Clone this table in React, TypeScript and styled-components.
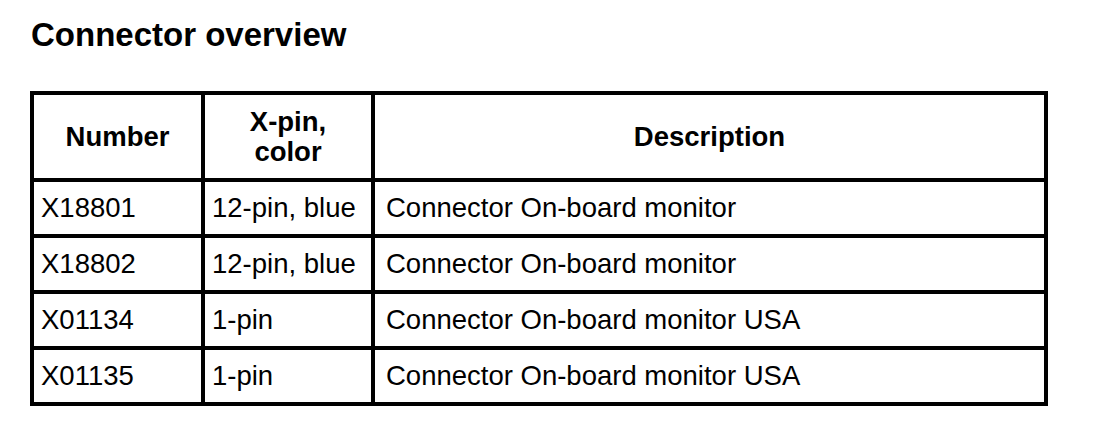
import React from "react";
import styled, { createGlobalStyle } from "styled-components";

const GlobalStyle = createGlobalStyle`
  html, body {
    margin: 0;
    padding: 0;
    background: #ffffff;
  }
  body {
    font-family: "Liberation Sans", Arial, Helvetica, sans-serif;
    color: #000000;
  }
`;

const Page = styled.div`
  width: 1120px;
  height: 434px;
  box-sizing: border-box;
  padding: 17px 0 0 30px;
  background: #ffffff;
`;

const Title = styled.h1`
  margin: 0 0 38px 1px;
  font-size: 33px;
  line-height: 36px;
  font-weight: 700;
`;

const Table = styled.div`
  display: grid;
  grid-template-columns: 167px 166px 669px;
  grid-template-rows: 83px repeat(4, 52px);
  gap: 4px;
  width: 1018px;
  box-sizing: border-box;
  border: 4px solid #000000;
  background: #000000;
`;

const Cell = styled.div<{ $head?: boolean; $pad?: number }>`
  background: #ffffff;
  display: flex;
  align-items: center;
  justify-content: ${(p) => (p.$head ? "center" : "flex-start")};
  text-align: ${(p) => (p.$head ? "center" : "left")};
  padding: 0 0 0 ${(p) => (p.$head ? 0 : p.$pad ?? 8)}px;
  font-size: 27.5px;
  line-height: 30px;
  font-weight: ${(p) => (p.$head ? 700 : 400)};
  white-space: nowrap;
`;

const rows = [
  ["X18801", "12-pin, blue", "Connector On-board monitor"],
  ["X18802", "12-pin, blue", "Connector On-board monitor"],
  ["X01134", "1-pin", "Connector On-board monitor USA"],
  ["X01135", "1-pin", "Connector On-board monitor USA"],
];

const pads = [7, 7, 11];

export default function App() {
  return (
    <>
      <GlobalStyle />
      <Page>
        <Title>Connector overview</Title>
        <Table>
          <Cell $head>Number</Cell>
          <Cell $head>
            X-pin,
            <br />
            color
          </Cell>
          <Cell $head>Description</Cell>
          {rows.map((r) =>
            r.map((c, i) => (
              <Cell key={r[0] + i} $pad={pads[i]}>
                {c}
              </Cell>
            ))
          )}
        </Table>
      </Page>
    </>
  );
}
